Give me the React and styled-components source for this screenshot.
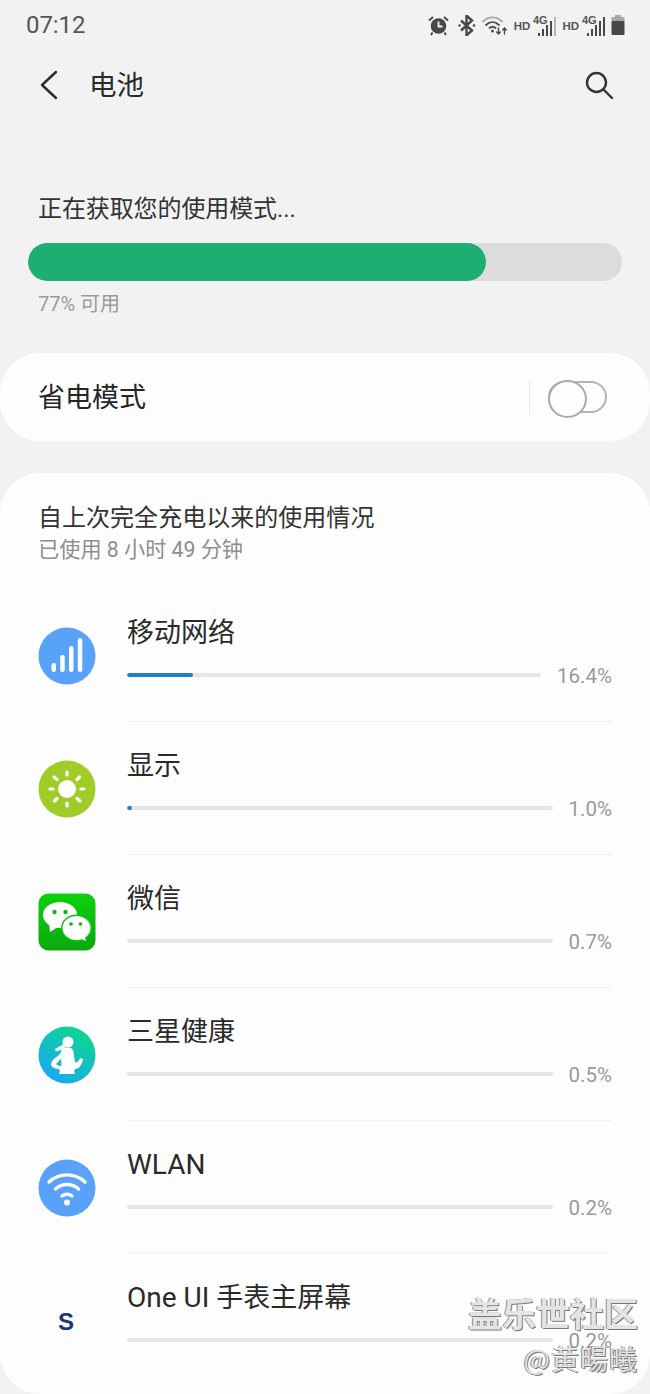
import React from "react";
import styled, { createGlobalStyle } from "styled-components";

const Global = createGlobalStyle`
  html, body { margin: 0; padding: 0; background: #f2f2f2; }
  * { box-sizing: border-box; }
`;
const FONT = `Roboto, "Noto Sans CJK SC", sans-serif`;

const Page = styled.div`
  position: relative;
  width: 650px;
  height: 1394px;
  overflow: hidden;
  background: #f2f2f2;
  font-family: ${FONT};
  color: #252525;
`;
const StatusBar = styled.div`
  height: 50px;
  padding: 0 25px 0 26px;
  display: flex;
  align-items: center;
  justify-content: space-between;
`;
const Clock = styled.span`
  font-size: 24px;
  line-height: 1;
  letter-spacing: -0.1px;
  color: #555;
`;
const StatusIcons = styled.div`
  display: flex;
  align-items: center;
  gap: 6px;
  color: #484848;
`;
const Hd = styled.span`
  font: 700 11.5px "Liberation Sans", sans-serif;
  margin: 2px -3px 0 0;
  color: #555;
`;
const Header = styled.header`
  height: 70px;
  padding: 0 36px 0 39px;
  display: flex;
  align-items: center;
  color: #2b2b2b;
`;
const Title = styled.h1`
  flex: 1;
  margin: 2px 0 0 30px;
  font-size: 27.5px;
  line-height: 40px;
  font-weight: 400;
`;
const Usage = styled.section`
  height: 233px;
  padding: 71px 28px 0;
`;
const UsageTitle = styled.div`
  margin-left: 10px;
  font-size: 24px;
  line-height: 36px;
  letter-spacing: -0.1px;
  color: #333;
`;
const BigBar = styled.div`
  height: 38px;
  margin-top: 16px;
  border-radius: 19px;
  background: #dcdcdc;
  overflow: hidden;
`;
const BigFill = styled.div`
  height: 100%;
  width: 77.1%;
  border-radius: 19px;
  background: #1fae71;
`;
const UsageNote = styled.div`
  margin: 9px 0 0 10px;
  font-size: 20px;
  line-height: 28px;
  color: #9a9a9a;
`;
const SaverCard = styled.section`
  height: 88px;
  padding: 0 43px 0 38px;
  display: flex;
  align-items: center;
  border-radius: 40px;
  background: #fdfdfd;
`;
const SaverLabel = styled.span`
  flex: 1;
  padding-top: 2px;
  font-size: 27px;
  line-height: 40px;
  color: #252525;
`;
const VRule = styled.span`
  width: 1px;
  height: 36px;
  margin-right: 18px;
  background: #ececec;
`;
const Switch = styled.span`
  position: relative;
  display: block;
  width: 59px;
  height: 32px;
  border: 2px solid #b4b4b4;
  border-radius: 16px;
  &::before {
    content: "";
    position: absolute;
    left: -2px;
    top: -3px;
    width: 35px;
    height: 34px;
    border: 2px solid #ababab;
    border-radius: 50%;
    background: #fdfdfd;
  }
`;
const ListCard = styled.section`
  height: 921px;
  margin-top: 32px;
  padding-top: 28px;
  border-radius: 40px;
  background: #fdfdfd;
`;
const ListHead = styled.div`
  height: 88px;
  padding-left: 38px;
`;
const ListTitle = styled.div`
  font-size: 24px;
  line-height: 34px;
  letter-spacing: 0.03px;
  color: #333;
`;
const ListSub = styled.div`
  font-size: 21.2px;
  line-height: 30px;
  color: #8e8e8e;
`;
const Row = styled.div`
  height: 133px;
  display: flex;
  align-items: center;
  padding: 0 38px;
`;
const IconSlot = styled.div`
  flex: none;
  width: 58px;
  height: 58px;
  margin: 1px 31px 0 0;
  display: flex;
  align-items: center;
  justify-content: center;
`;
const RowBody = styled.div`
  flex: 1;
  min-width: 0;
  height: 100%;
  padding-top: 24px;
  border-bottom: ${(p) => (p.$last ? "none" : "1px solid #f1f1f1")};
`;
const RowTitle = styled.div`
  font-size: 27px;
  line-height: 40px;
  color: #2a2a2a;
`;
const Latin = styled.span`
  font-size: 28px;
`;
const Meter = styled.div`
  display: flex;
  align-items: center;
  gap: 16px;
  height: 28px;
  margin-top: 8px;
`;
const Track = styled.div`
  flex: 1;
  height: 4px;
  border-radius: 2px;
  background: #e6e6e6;
  overflow: hidden;
`;
const Fill = styled.div`
  height: 100%;
  border-radius: 2px;
  background: #1f7fcc;
`;
const Percent = styled.span`
  margin-top: 2px;
  font-size: 20.5px;
  line-height: 28px;
  color: #9a9a9a;
`;
const Watermark = styled.div`
  position: absolute;
  right: 12px;
  bottom: 18px;
  text-align: right;
  font-family: "Noto Sans CJK SC", sans-serif;
  color: #e4e4e4;
  text-shadow: 1px 1px 0 #777, -1px 0 0 #8a8a8a;
`;
const WmTop = styled.div`
  font-size: 34px;
  line-height: 42px;
  font-weight: 700;
`;
const WmBottom = styled.div`
  font-size: 28px;
  line-height: 36px;
  margin-top: 6px;
  letter-spacing: 1px;
`;

const Alarm = () => (
  <svg width="21" height="21" viewBox="0 0 21 21" style={{ marginRight: 3 }}>
    <circle cx="10.5" cy="11" r="7.8" fill="currentColor" />
    <path d="M10.5 6.500v5h4" stroke="#f2f2f2" strokeWidth="1.800" fill="none" />
    <path d="M1 5.500 5 2M20 5.500 16 2M4.500 17.500 3 20M16.500 17.500 18 20" stroke="currentColor" strokeWidth="2" fill="none" />
  </svg>
);
const Bluetooth = () => (
  <svg width="18" height="21" viewBox="0 0 18 21" fill="none" stroke="currentColor" strokeWidth="2.400">
    <path d="M3 5.500l11 10-5.500 5V.5L14 5.500 3 15.500" />
    <circle cx="1.500" cy="10.500" r="1.200" fill="currentColor" stroke="none" />
    <circle cx="16" cy="10.500" r="1.300" fill="currentColor" stroke="none" />
  </svg>
);
const WifiStatus = () => (
  <svg width="26" height="21" viewBox="0 0 26 21" fill="none" strokeLinecap="round">
    <path d="M1 6.500C6.500 1 14.500 1 20 6.500" stroke="#a8a8a8" strokeWidth="1.800" />
    <path d="M4 10c4-3.800 9-3.800 13 0" stroke="#484848" strokeWidth="1.800" />
    <path d="M7.500 13c2-1.700 4-1.700 6 0" stroke="#484848" strokeWidth="1.800" />
    <circle cx="10.500" cy="16" r="1.500" fill="#484848" />
    <path d="M16.500 13v6M14.700 17l1.800 2 1.800-2M22.500 19v-6M20.700 15l1.800-2 1.800 2" stroke="#484848" strokeWidth="1.400" />
  </svg>
);
const Signal = ({ faded }) => (
  <svg width="23" height="23" viewBox="0 0 23 23">
    <text x="0" y="10" fontFamily="Liberation Sans" fontWeight="700" fontSize="11" fill="#555">4G</text>
    <rect x="5" y="19" width="2" height="3" fill="#484848" />
    <rect x="9" y="15" width="2" height="7" fill="#484848" />
    <rect x="13" y="11" width="2" height="11" fill="#484848" />
    <rect x="17" y="7" width="2" height="15" fill="#484848" />
    <rect x="21" y="3" width="2" height="19" fill={faded ? "#b5b5b5" : "#484848"} />
  </svg>
);
const Battery = () => (
  <svg width="14" height="20" viewBox="0 0 14 20">
    <rect x="4" y="0" width="6" height="3" fill="#a8a8a8" />
    <rect x="0.500" y="2" width="13" height="4" fill="#a8a8a8" />
    <rect x="0.500" y="6" width="13" height="14" rx="1" fill="#484848" />
  </svg>
);
const Back = () => (
  <svg width="20" height="32" viewBox="0 0 20 32" fill="none" stroke="#2b2b2b" strokeWidth="2.400" strokeLinecap="round" strokeLinejoin="round">
    <path d="M17 3 3 16l14 13" />
  </svg>
);
const Search = () => (
  <svg width="30" height="30" viewBox="0 0 30 30" fill="none" stroke="#333" strokeWidth="2.400" strokeLinecap="round">
    <circle cx="12.500" cy="12.500" r="9.500" />
    <path d="m20 20 8 8" />
  </svg>
);
const NetIcon = () => (
  <svg width="58" height="58" viewBox="0 0 58 58">
    <circle cx="29" cy="29" r="28.500" fill="#58a3f9" />
    <g fill="#fff">
      <rect x="13.500" y="36" width="4.500" height="9" rx="2.200" />
      <rect x="22.200" y="28" width="4.500" height="17" rx="2.200" />
      <rect x="31" y="19" width="4.500" height="26" rx="2.200" />
      <rect x="39.800" y="11" width="4.500" height="34" rx="2.200" />
    </g>
  </svg>
);
const SunIcon = () => (
  <svg width="58" height="58" viewBox="0 0 58 58">
    <circle cx="29" cy="29" r="28.500" fill="#a0cc28" />
    <circle cx="29" cy="29" r="9" fill="#fff" />
    <g stroke="#fff" strokeWidth="3.200" strokeLinecap="round">
      <path d="M29 12v3M29 43v3M12 29h3M43 29h3M16 17l3 2.500M39 38.500l3 2.500M16.500 41l2.500-2.500M39 19.500l2.500-2.500" />
    </g>
  </svg>
);
const WeChatIcon = () => (
  <svg width="58" height="58" viewBox="0 0 58 58">
    <defs>
      <linearGradient id="wx" x1="0" y1="0" x2="0" y2="1">
        <stop offset="0" stopColor="#0bd20b" />
        <stop offset="1" stopColor="#0ba80f" />
      </linearGradient>
    </defs>
    <rect x="0.500" y="0.500" width="57" height="57" rx="10" fill="url(#wx)" />
    <ellipse cx="22" cy="22" rx="17" ry="13" fill="#fff" />
    <path d="M11 30l1 9 8-5z" fill="#fff" />
    <ellipse cx="38.500" cy="35" rx="15.500" ry="13.500" fill="#0cc40e" />
    <ellipse cx="38.500" cy="35" rx="14" ry="12" fill="#fff" />
    <path d="M41 45l7 3-2-7z" fill="#fff" />
    <circle cx="16.500" cy="19" r="2.200" fill="#0cb80e" />
    <circle cx="27.500" cy="19" r="2.200" fill="#0cb80e" />
    <circle cx="33" cy="31" r="1.800" fill="#0cb80e" />
    <circle cx="42.500" cy="31" r="1.800" fill="#0cb80e" />
  </svg>
);
const HealthIcon = () => (
  <svg width="58" height="58" viewBox="0 0 58 58">
    <defs>
      <linearGradient id="sh" x1="0.800" y1="0.100" x2="0.300" y2="0.950">
        <stop offset="0" stopColor="#0dd68f" />
        <stop offset="1" stopColor="#1aa9f2" />
      </linearGradient>
    </defs>
    <circle cx="29" cy="29" r="28.500" fill="url(#sh)" />
    <circle cx="30" cy="16" r="5.500" fill="#fff" />
    <path d="M26 18l-9 5 1 2.500 9-3z" fill="#fff" />
    <path d="M24 23C27 21 33 21 35 24C36 27 36 31 37 36C39 37 41 35 42 32L45 33C44 39 41 43 37 43C36 45 36 47 37 48L21 48C22 46 22 44 21 43C17 43 13 41 13 38C14 33 19 31 22 28Z" fill="#fff" />
    <path d="M20 36L23 32.500L23.500 40C21 40 19 39 18 38Z" fill="url(#sh)" />
  </svg>
);
const WifiIcon = () => (
  <svg width="58" height="58" viewBox="0 0 58 58">
    <circle cx="29" cy="29" r="28.500" fill="#58a3f9" />
    <g fill="none" stroke="#fff" strokeWidth="3.400" strokeLinecap="round">
      <path d="M11 23c10-9.500 26-9.500 36 0" />
      <path d="M17.500 30c6.500-6 16.500-6 23 0" />
      <path d="M24 37c3-2.500 7-2.500 10 0" />
    </g>
    <circle cx="29" cy="43.500" r="3" fill="#fff" />
  </svg>
);
const WatchIcon = () => (
  <svg width="58" height="58" viewBox="0 0 58 58">
    <text x="28" y="38" textAnchor="middle" fontFamily="Liberation Sans" fontWeight="700" fontSize="24" fill="#1d3480">S</text>
  </svg>
);

const rows = [
  { id: "net", name: "移动网络", pct: "16.4%", fill: 15.9, Icon: NetIcon },
  { id: "display", name: "显示", pct: "1.0%", fill: 1.2, Icon: SunIcon },
  { id: "wechat", name: "微信", pct: "0.7%", fill: 0, Icon: WeChatIcon },
  { id: "health", name: "三星健康", pct: "0.5%", fill: 0, Icon: HealthIcon },
  { id: "wlan", name: <Latin>WLAN</Latin>, pct: "0.2%", fill: 0, Icon: WifiIcon },
  {
    id: "watch",
    name: (
      <>
        <Latin>One UI </Latin>手表主屏幕
      </>
    ),
    pct: "0.2%",
    fill: 0,
    Icon: WatchIcon,
  },
];

export default function App() {
  return (
    <Page>
      <Global />
      <StatusBar>
        <Clock>07:12</Clock>
        <StatusIcons>
          <Alarm />
          <Bluetooth />
          <WifiStatus />
          <Hd>HD</Hd>
          <Signal faded />
          <Hd>HD</Hd>
          <Signal />
          <Battery />
        </StatusIcons>
      </StatusBar>
      <Header>
        <Back />
        <Title>电池</Title>
        <Search />
      </Header>
      <Usage>
        <UsageTitle>正在获取您的使用模式...</UsageTitle>
        <BigBar>
          <BigFill />
        </BigBar>
        <UsageNote>77% 可用</UsageNote>
      </Usage>
      <SaverCard>
        <SaverLabel>省电模式</SaverLabel>
        <VRule />
        <Switch />
      </SaverCard>
      <ListCard>
        <ListHead>
          <ListTitle>自上次完全充电以来的使用情况</ListTitle>
          <ListSub>已使用 8 小时 49 分钟</ListSub>
        </ListHead>
        {rows.map(({ id, name, pct, fill, Icon }, i) => (
          <Row key={id}>
            <IconSlot>
              <Icon />
            </IconSlot>
            <RowBody $last={i === rows.length - 1}>
              <RowTitle>{name}</RowTitle>
              <Meter>
                <Track>
                  <Fill style={{ width: `${fill}%` }} />
                </Track>
                <Percent>{pct}</Percent>
              </Meter>
            </RowBody>
          </Row>
        ))}
      </ListCard>
      <Watermark>
        <WmTop>盖乐世社区</WmTop>
        <WmBottom>@黄暘曦</WmBottom>
      </Watermark>
    </Page>
  );
}
